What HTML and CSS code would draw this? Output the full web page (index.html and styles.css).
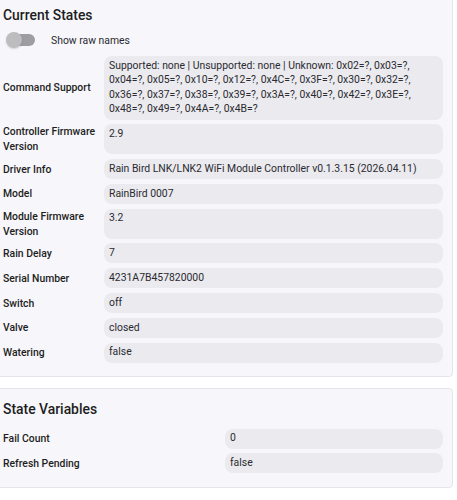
FILE: index.html
```html
<!DOCTYPE html>
<html>
<head>
<meta charset="utf-8">
<link rel="stylesheet" href="styles.css">
</head>
<body>
<section class="card card-first">
  <h2 class="card-title">Current States</h2>
  <div class="toggle-row">
    <span class="toggle"><span class="toggle-knob"></span></span>
    <span class="toggle-label">Show raw names</span>
  </div>
  <div class="grid grid-states">
    <div class="label">Command Support</div>
    <div class="value">Supported: none | Unsupported: none | Unknown: 0x02=?, 0x03=?, 0x04=?, 0x05=?, 0x10=?, 0x12=?, 0x4C=?, 0x3F=?, 0x30=?, 0x32=?, 0x36=?, 0x37=?, 0x38=?, 0x39=?, 0x3A=?, 0x40=?, 0x42=?, 0x3E=?, 0x48=?, 0x49=?, 0x4A=?, 0x4B=?</div>
    <div class="label">Controller Firmware Version</div>
    <div class="value">2.9</div>
    <div class="label">Driver Info</div>
    <div class="value">Rain Bird LNK/LNK2 WiFi Module Controller v0.1.3.15 (2026.04.11)</div>
    <div class="label">Model</div>
    <div class="value">RainBird 0007</div>
    <div class="label">Module Firmware Version</div>
    <div class="value">3.2</div>
    <div class="label">Rain Delay</div>
    <div class="value">7</div>
    <div class="label">Serial Number</div>
    <div class="value">4231A7B457820000</div>
    <div class="label">Switch</div>
    <div class="value">off</div>
    <div class="label">Valve</div>
    <div class="value">closed</div>
    <div class="label">Watering</div>
    <div class="value">false</div>
  </div>
</section>
<section class="card card-second">
  <h2 class="card-title">State Variables</h2>
  <div class="grid grid-vars">
    <div class="label">Fail Count</div>
    <div class="value">0</div>
    <div class="label">Refresh Pending</div>
    <div class="value">false</div>
  </div>
</section>
</body>
</html>
```

FILE: styles.css
```css
html, body {
  margin: 0;
  padding: 0;
  background: #ffffff;
}
body {
  font-family: Roboto, "Noto Sans", sans-serif;
  color: #1d1d22;
  width: 457px;
  overflow: hidden;
}
.card {
  background: #f7f7fb;
  border: 1px solid #e4e4ea;
  border-radius: 4px;
  margin-left: -10px;
  width: 463px;
  box-sizing: border-box;
  padding: 0 9px 14px 12px;
}
.card-first {
  margin-top: -8px;
  padding-top: 11px;
  padding-bottom: 13px;
}
.card-second {
  margin-top: 11px;
  padding-top: 9px;
}
.card-title {
  margin: 0;
  font-size: 13.9px;
  font-weight: 500;
  line-height: 22px;
  color: #1d1d22;
}
.toggle-row {
  display: flex;
  align-items: center;
  height: 18px;
  margin-top: 5px;
  margin-bottom: 7px;
}
.toggle {
  position: relative;
  display: inline-block;
  width: 27px;
  height: 12px;
  margin-left: 5px;
  border-radius: 6px;
  background: #9d9da2;
}
.toggle-knob {
  position: absolute;
  left: -2px;
  top: -2px;
  width: 16px;
  height: 16px;
  border-radius: 50%;
  background: #bdbdc0;
  box-shadow: 0 1px 2px rgba(0,0,0,0.15);
}
.toggle-label {
  margin-left: 16px;
  font-size: 10.4px;
  color: #2a2a30;
}
.grid {
  display: grid;
  row-gap: 4.8px;
  align-items: stretch;
}
.grid-states {
  grid-template-columns: 101px 339px;
}
.grid-vars {
  grid-template-columns: 222px 218px;
  margin-top: 9px;
}
.label {
  align-self: center;
  font-size: 10.4px;
  font-weight: 500;
  line-height: 15px;
  padding-right: 4px;
  color: #1d1d22;
}
.value {
  background: #eaeaef;
  border-radius: 8px;
  font-size: 10.4px;
  line-height: 14.5px;
  padding: 2.75px 6px 2.75px 5px;
  min-height: 14.5px;
  color: #2a2a30;
}
```
